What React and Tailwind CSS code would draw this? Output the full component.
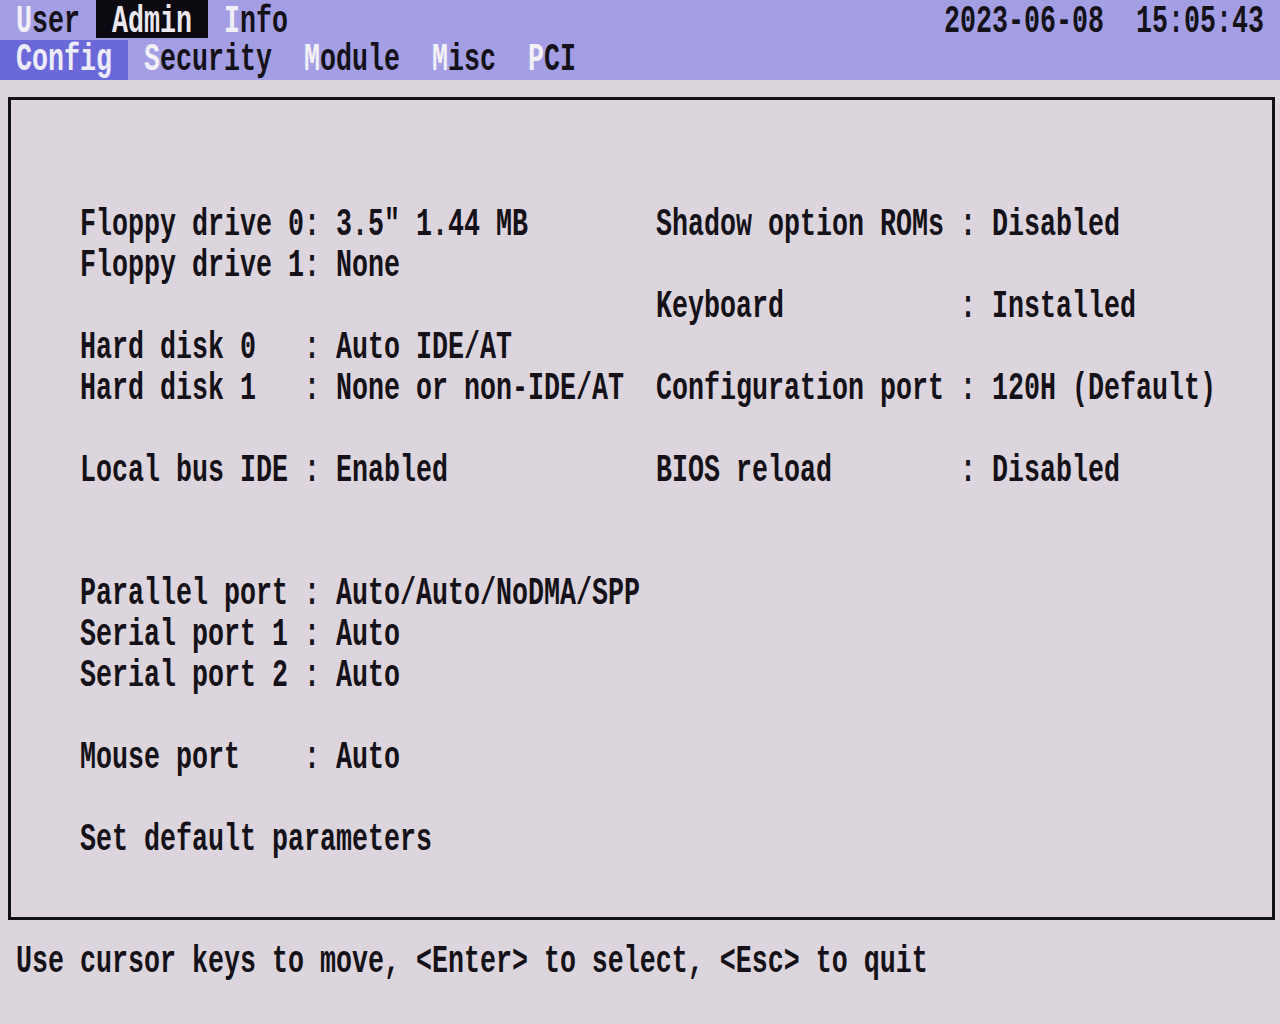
import React from "react";

// text-mode cell: 16px wide, 41px tall; glyphs stretched vertically like a VGA font
function Txt({ children, className = "", top = "mt-[2px]" }) {
  return (
    <span className={`inline-block ${top} origin-top scale-y-[1.45] whitespace-pre ${className}`}>
      {children}
    </span>
  );
}

const rows = [
  ['Floppy drive 0: 3.5" 1.44 MB', "Shadow option ROMs : Disabled"],
  ["Floppy drive 1: None", ""],
  ["", "Keyboard           : Installed"],
  ["Hard disk 0   : Auto IDE/AT", ""],
  ["Hard disk 1   : None or non-IDE/AT", "Configuration port : 120H (Default)"],
  ["", ""],
  ["Local bus IDE : Enabled", "BIOS reload        : Disabled"],
  ["", ""],
  ["", ""],
  ["Parallel port : Auto/Auto/NoDMA/SPP", ""],
  ["Serial port 1 : Auto", ""],
  ["Serial port 2 : Auto", ""],
  ["", ""],
  ["Mouse port    : Auto", ""],
  ["", ""],
  ["Set default parameters", ""],
];

export default function App() {
  return (
    <div className="w-[1280px] h-[1024px] overflow-hidden bg-[#ddd5dd] text-[#141218] font-['Liberation_Mono',monospace] font-bold text-[26.67px] leading-[24px]">
      {/* top menu */}
      <div className="h-[80px] bg-[#a49fe4]">
        <div className="flex h-[40px]">
          <div className="w-[96px] h-[38px]">
            <Txt top="mt-[4px]"> </Txt>
            <Txt top="mt-[4px]" className="text-[#f2f0f6]">U</Txt>
            <Txt top="mt-[4px]">ser</Txt>
          </div>
          <div className="w-[112px] h-[38px] bg-[#0c0a10] text-[#ece8f0]">
            <Txt top="mt-[4px]"> Admin </Txt>
          </div>
          <div className="w-[16px]" />
          <div>
            <Txt top="mt-[4px]" className="text-[#f2f0f6]">I</Txt>
            <Txt top="mt-[4px]">nfo</Txt>
          </div>
          <div className="flex-1" />
          <div className="pr-[16px]">
            <Txt top="mt-[4px]">2023-06-08  15:05:43</Txt>
          </div>
        </div>
        <div className="flex h-[40px]">
          <div className="w-[128px] h-[40px] bg-[#6b69d9] text-[#eeecf8]">
            <Txt> Config </Txt>
          </div>
          {[
            ["S", "ecurity", "w-[176px] pl-[16px]"],
            ["M", "odule", "w-[128px]"],
            ["M", "isc", "w-[96px]"],
            ["P", "CI", "w-[64px]"],
          ].map(([k, rest, w]) => (
            <div key={rest} className={w}>
              <Txt className="text-[#f2f0f6]">{k}</Txt>
              <Txt>{rest}</Txt>
            </div>
          ))}
        </div>
      </div>

      {/* framed settings panel */}
      <div className="ml-[8px] mt-[17px] w-[1267px] h-[823px] border-[3px] border-[#111014] pt-[105px] pl-[69px]">
        {rows.map(([l, r], i) => (
          <div key={i} className="flex h-[41px]">
            <div className="w-[576px]">
              <Txt>{l}</Txt>
            </div>
            <div>
              <Txt>{r}</Txt>
            </div>
          </div>
        ))}
      </div>

      {/* help line */}
      <div className="mt-[22px] h-[41px] pl-[16px]">
        <Txt>Use cursor keys to move, &lt;Enter&gt; to select, &lt;Esc&gt; to quit</Txt>
      </div>
    </div>
  );
}
